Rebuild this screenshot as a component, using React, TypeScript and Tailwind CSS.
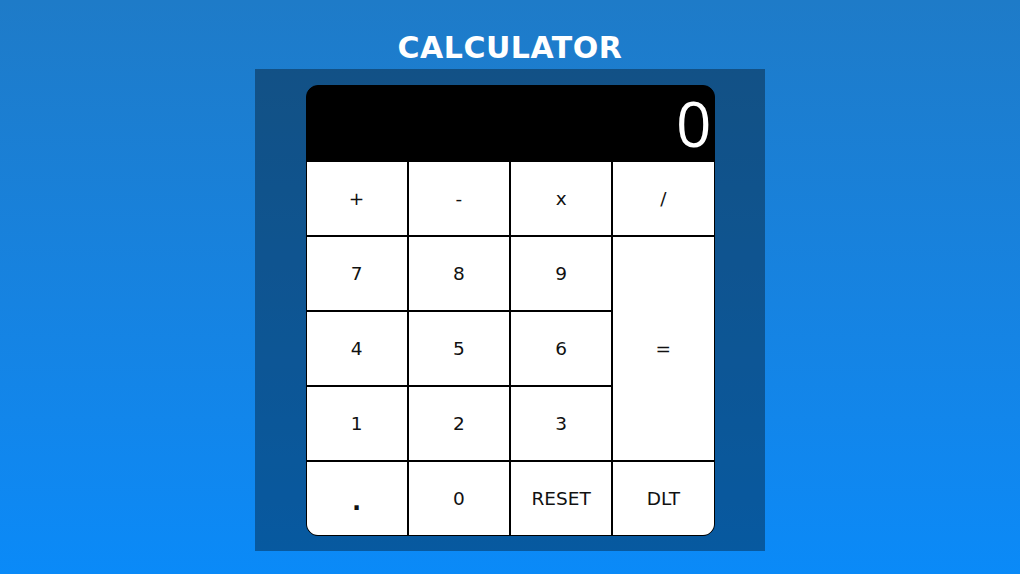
import { useState } from "react";

const KEYS: { label: string; className?: string }[] = [
  { label: "+" },
  { label: "-" },
  { label: "x" },
  { label: "/" },
  { label: "7" },
  { label: "8" },
  { label: "9" },
  { label: "=", className: "row-span-3" },
  { label: "4" },
  { label: "5" },
  { label: "6" },
  { label: "1" },
  { label: "2" },
  { label: "3" },
  { label: ".", className: "text-[24px] font-bold pt-[6px]" },
  { label: "0" },
  { label: "RESET" },
  { label: "DLT" },
];

export default function App() {
  const [display, setDisplay] = useState("0");

  const press = (k: string) => {
    if (k === "RESET") return setDisplay("0");
    if (k === "DLT") return setDisplay((d) => (d.length > 1 ? d.slice(0, -1) : "0"));
    if (k === "=") {
      try {
        const expr = display.replace(/x/g, "*");
        const result = Function(`return (${expr})`)();
        setDisplay(String(result));
      } catch {
        setDisplay("0");
      }
      return;
    }
    setDisplay((d) => (d === "0" && k !== "." ? k : d + k));
  };

  return (
    <div className="min-h-[574px] w-full bg-gradient-to-b from-[#1e7bc8] to-[#0a8af8] flex flex-col items-center font-['DejaVu_Sans',sans-serif]">
      <h1 className="pt-[29px] h-[69px] text-[30px] leading-[38px] font-bold text-white tracking-[0.5px]">
        CALCULATOR
      </h1>
      <div className="w-[510px] bg-black/35 pt-[16px] pb-[15px] flex justify-center">
        <div className="w-[409px] rounded-xl overflow-hidden border border-black bg-black">
          <div className="h-[75px] bg-black text-white flex items-center justify-end pr-[2px] font-['Open_Sans',sans-serif] text-[62px] leading-[75px]">
            <span>{display}</span>
          </div>
          <div className="grid grid-cols-4 grid-rows-[repeat(5,73px)] gap-[2px] pt-[1px]">
            {KEYS.map((k) => (
              <button
                key={k.label}
                onClick={() => press(k.label)}
                className={`bg-white text-[#111] text-[18.5px] flex items-center justify-center ${k.className ?? ""}`}
              >
                {k.label}
              </button>
            ))}
          </div>
        </div>
      </div>
    </div>
  );
}
